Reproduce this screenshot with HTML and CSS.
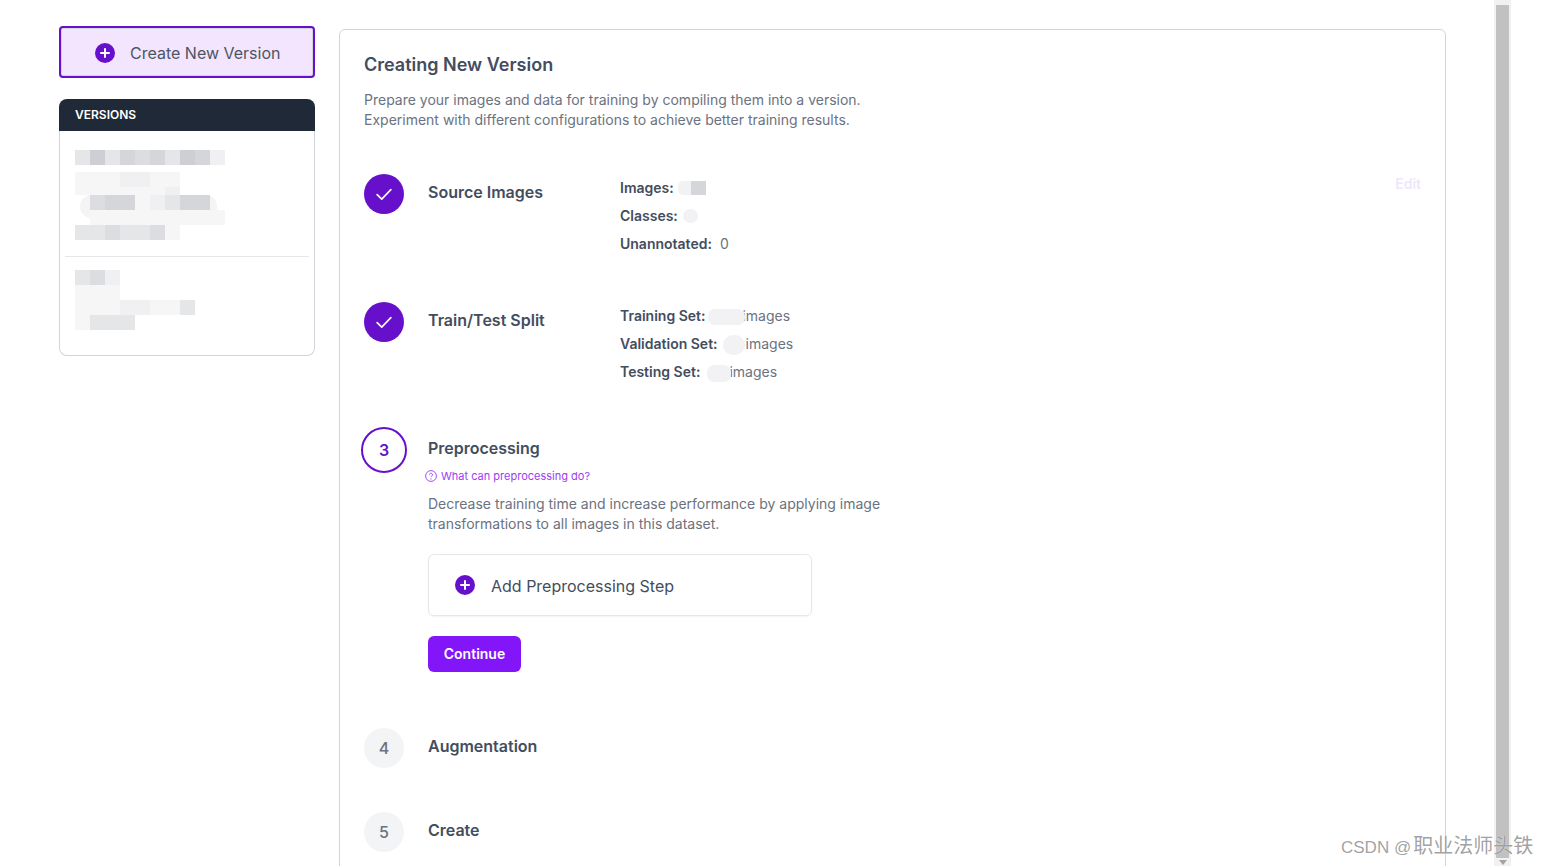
FILE: index.html
```html
<!DOCTYPE html>
<html lang="en">
<head>
  <meta charset="UTF-8">
  <title>Creating New Version</title>
  <link rel="stylesheet" href="styles.css">
</head>
<body>

  <div class="page">
    <div class="sidebar">
      <button class="create-btn">
        <svg class="plus-icon" viewBox="0 0 20 20"><circle cx="10" cy="10" r="10" fill="#6610cc"/><path d="M10 6v8M6 10h8" stroke="#fff" stroke-width="2" stroke-linecap="round"/></svg>
        <span>Create New Version</span>
      </button>

      <div class="versions">
        <div class="versions-head">VERSIONS</div>
        <div class="version-list">
          <div class="version">
            <div class="mrow"><i class="s3"></i><i class="s6"></i><i class="s3"></i><i class="s5"></i><i class="s4"></i><i class="s5"></i><i class="s3"></i><i class="s6"></i><i class="s5"></i><i class="s2"></i></div>
            <div class="mgap"></div>
            <div class="mrow"><i class="s1"></i><i class="s1"></i><i class="s1"></i><i class="s2"></i><i class="s2"></i><i class="s1"></i><i class="s1"></i></div>
            <div class="mrow short"><i class="s1"></i><i class="s1"></i><i class="s1"></i><i class="s1"></i><i class="s1"></i><i class="s1"></i><i class="s2"></i></div>
            <div class="mrow pill"><i class="s0"></i><i class="s4"></i><i class="s5"></i><i class="s5"></i><i class="s1"></i><i class="s2"></i><i class="s3"></i><i class="s5"></i><i class="s5"></i></div>
            <div class="mrow"><i class="s0"></i><i class="s1"></i><i class="s1"></i><i class="s1"></i><i class="s1"></i><i class="s1"></i><i class="s1"></i><i class="s1"></i><i class="s1"></i><i class="s1"></i></div>
            <div class="mrow"><i class="s3"></i><i class="s3"></i><i class="s4"></i><i class="s3"></i><i class="s3"></i><i class="s4"></i><i class="s1"></i></div>
          </div>
          <div class="version">
            <div class="mrow"><i class="s3"></i><i class="s4"></i><i class="s2"></i></div>
            <div class="mrow"><i class="s1"></i><i class="s1"></i><i class="s1"></i></div>
            <div class="mrow"><i class="s1"></i><i class="s1"></i><i class="s1"></i><i class="s2"></i><i class="s2"></i><i class="s1"></i><i class="s1"></i><i class="s3"></i></div>
            <div class="mrow"><i class="s1"></i><i class="s3"></i><i class="s3"></i><i class="s3"></i></div>
          </div>
        </div>
      </div>
    </div>

    <div class="card">
      <h1 class="card-title">Creating New Version</h1>
      <p class="card-desc">Prepare your images and data for training by compiling them into a version.<br>Experiment with different configurations to achieve better training results.</p>

      <div class="step">
        <div class="marker done">
          <svg viewBox="0 0 16 16" width="20" height="20"><path d="M2.5 8.5l3.7 3.6 7.3-7.6" fill="none" stroke="#fff" stroke-width="1.3" stroke-linecap="round" stroke-linejoin="round"/></svg>
        </div>
        <div class="step-title">Source Images</div>
        <div class="details">
          <div><b>Images:</b><span class="blot blot-images"></span></div>
          <div><b>Classes:</b><span class="blot blot-classes"></span></div>
          <div><b>Unannotated:</b><span class="val">0</span></div>
        </div>
        <a class="edit">Edit</a>
      </div>

      <div class="step">
        <div class="marker done">
          <svg viewBox="0 0 16 16" width="20" height="20"><path d="M2.5 8.5l3.7 3.6 7.3-7.6" fill="none" stroke="#fff" stroke-width="1.3" stroke-linecap="round" stroke-linejoin="round"/></svg>
        </div>
        <div class="step-title">Train/Test Split</div>
        <div class="details">
          <div><b>Training Set:</b><span class="blot blot-train"></span>images</div>
          <div><b>Validation Set:</b><span class="blot blot-valid"></span>images</div>
          <div><b>Testing Set:</b><span class="blot blot-test"></span>images</div>
        </div>
      </div>

      <div class="step step-open">
        <div class="marker current">3</div>
        <div class="step-body">
          <div class="step-title">Preprocessing</div>
          <a class="help-link">
            <svg viewBox="0 0 12 12" width="12" height="12"><circle cx="6" cy="6" r="5.4" fill="none" stroke="#9d3cf2" stroke-width="0.9"/><path d="M4.5 4.7a1.5 1.5 0 1 1 2.3 1.3c-.5.3-.8.6-.8 1.1" fill="none" stroke="#9d3cf2" stroke-width="0.9"/><circle cx="6" cy="8.9" r=".55" fill="#9d3cf2"/></svg>
            What can preprocessing do?
          </a>
          <p class="step-desc">Decrease training time and increase performance by applying image<br>transformations to all images in this dataset.</p>
          <div class="add-step">
            <svg class="plus-icon" viewBox="0 0 20 20"><circle cx="10" cy="10" r="10" fill="#6610cc"/><path d="M10 6v8M6 10h8" stroke="#fff" stroke-width="2" stroke-linecap="round"/></svg>
            <span>Add Preprocessing Step</span>
          </div>
          <button class="continue-btn">Continue</button>
        </div>
      </div>

      <div class="step step-todo">
        <div class="marker todo">4</div>
        <div class="step-title">Augmentation</div>
      </div>

      <div class="step step-todo">
        <div class="marker todo">5</div>
        <div class="step-title">Create</div>
      </div>
    </div>

    <div class="scrollbar">
      <div class="thumb"></div>
      <div class="arrow"></div>
    </div>
  </div>

  <div class="watermark">CSDN @<span class="watermark-cjk">职业法师头铁</span></div>

</body>
</html>
```

FILE: styles.css
```css
* { box-sizing: border-box; }
html, body { margin: 0; height: 866px; overflow: hidden; background: #fff; }
body { font-family: Inter, "Noto Sans CJK SC", sans-serif; color: #434d5e; }

.page { display: flex; height: 866px; padding-left: 59px; overflow: hidden; }

.sidebar { width: 256px; flex: none; padding-top: 26px; }
.create-btn { display: flex; align-items: center; gap: 15px; width: 100%; height: 52px; padding: 2px 0 0 34px; background: #f3e5fd; border: 2px solid #6610cc; box-shadow: inset 0 0 0 1px #d1d5db; border-radius: 4px; font: 400 16px Inter, sans-serif; color: #4b5563; }
.plus-icon { width: 20px; height: 20px; flex: none; }

.versions { margin-top: 21px; }
.versions-head { height: 32px; line-height: 32px; padding-left: 16px; background: #1f2937; color: #fff; font-size: 12px; font-weight: 600; border-radius: 8px 8px 0 0; }
.version-list { height: 225px; border: 1px solid #d1d5db; border-top: 0; border-radius: 0 0 8px 8px; }
.version { height: 126px; margin: 0 5px; padding: 19px 10px 0; border-bottom: 1px solid #e5e7eb; }
.version + .version { height: 98px; padding-top: 13px; border-bottom: 0; }

.mrow { display: flex; height: 15px; }
.mrow i { display: block; width: 15px; height: 15px; }
.mgap { height: 7px; }
.mrow.short { height: 8px; }
.mrow.short i { height: 8px; }
.mrow.pill { width: 137px; height: 23px; margin: 0 0 -8px 5px; background: #f4f4f5; border-radius: 12px; }
.mrow.pill i:first-child { width: 10px; }
.s0 { background: transparent; }
.s1 { background: #f6f6f7; }
.s2 { background: #f0f0f2; }
.s3 { background: #e5e6e8; }
.s4 { background: #dcdde0; }
.s5 { background: #d4d6da; }
.s6 { background: #cdcfd4; }

.card { width: 1107px; flex: none; margin: 29px 0 0 24px; height: 900px; padding: 24px; background: #fff; border: 1px solid #d1d5db; border-radius: 6px; }
.card-title { margin: 1px 0 0; font-size: 18px; line-height: 20px; font-weight: 600; color: #434d5e; }
.card-desc { margin: 15px 0 44px; font-size: 14px; line-height: 20px; color: #6b7280; }

.step { display: flex; margin-bottom: 44px; position: relative; }
.step-open { margin-bottom: 56px; }
.marker { width: 40px; height: 40px; flex: none; margin-right: 24px; border-radius: 50%; display: flex; align-items: center; justify-content: center; font-size: 16px; font-weight: 500; }
.marker.done { background: #6610cc; }
.marker.current { width: 46px; height: 46px; margin: -3px 21px 0 -3px; border: 2px solid #6610cc; color: #6610cc; font-weight: 600; }
.marker.todo { background: #f3f4f6; color: #6b7280; }

.step-title { width: 192px; padding-top: 6px; font-size: 16px; line-height: 24px; font-weight: 600; color: #434d5e; }
.step-body .step-title { width: auto; }

.details { font-size: 14px; line-height: 28px; color: #6b7280; }
.details > div { height: 28px; white-space: nowrap; }
.details b { font-weight: 600; color: #434d5e; }
.val { margin-left: 8px; }
.blot { display: inline-block; vertical-align: middle; margin-top: -2px; background: #f2f2f4; }
.blot-images { width: 28px; height: 14px; margin-left: 4px; border-radius: 5px 0 0 5px; background: linear-gradient(90deg, #f2f2f4 45%, #d4d6da 45%); }
.blot-classes { width: 15px; height: 14px; margin-left: 5px; border-radius: 7px; }
.blot-train { width: 37px; height: 16px; margin: 0 -3px 0 3px; border-radius: 7px; position: relative; }
.blot-valid { width: 22px; height: 20px; margin: 0 1px 0 5px; border-radius: 10px; }
.blot-test { width: 24px; height: 17px; margin: 0 -2px 0 7px; border-radius: 7px; position: relative; }

.edit { position: absolute; right: 0; top: 0; font-size: 14px; line-height: 20px; font-weight: 600; color: #efe6fb; }

.help-link { display: flex; align-items: center; gap: 4px; margin: 8px 0 0 -3px; font-size: 11px; line-height: 16px; color: #9d3cf2; }
.step-desc { margin: 10px 0 20px; font-size: 14px; line-height: 20px; color: #6b7280; }

.add-step { display: flex; align-items: center; gap: 16px; width: 384px; height: 62px; padding-left: 26px; border: 1px solid #e5e7eb; border-radius: 6px; box-shadow: 0 1px 2px rgba(0,0,0,.05); font-size: 16px; color: #434d5e; }
.add-step span { padding-top: 2px; }
.continue-btn { display: block; width: 93px; height: 36px; margin-top: 20px; padding: 0 0 2px; background: #8315f9; color: #fff; border: 0; border-radius: 6px; font: 600 14px Inter, sans-serif; }

.scrollbar { width: 17px; flex: none; margin-left: 48px; background: #f1f1f1; padding: 5px 2px 0; position: relative; }
.thumb { height: 853px; background: #c1c1c1; }
.arrow { position: absolute; left: 5px; bottom: 1px; border: 4px solid transparent; border-top: 5px solid #a3a3a3; border-bottom: 0; }

.watermark { position: absolute; left: 1341px; top: 834px; font-family: "Liberation Sans", "Noto Sans CJK SC", sans-serif; font-size: 17px; line-height: 24px; color: rgba(120,120,120,.7); text-shadow: 0 0 1px #fff; white-space: nowrap; }
.watermark-cjk { font-size: 20px; margin-left: 2px; }
```
